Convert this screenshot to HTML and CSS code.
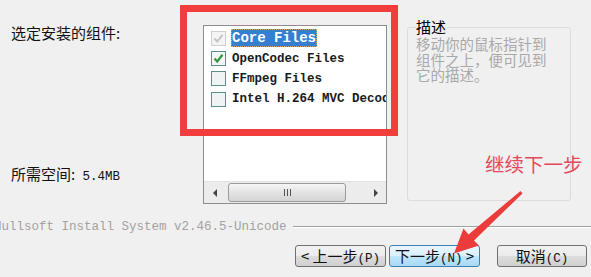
FILE: index.html
```html
<!DOCTYPE html>
<html lang="zh-CN">
<head>
    <meta charset="UTF-8">
    <meta name="viewport" content="width=device-width, initial-scale=1.0">
    <title>选择组件</title>
    <link rel="stylesheet" href="styles.css">
</head>
<body>
    <div class="installer">
        <div class="main">
            <div class="side">
                <div class="side-label">选定安装的组件:</div>
                <div class="side-label space">所需空间: <span class="mono">5.4MB</span></div>
            </div>

            <div class="listbox">
                <ul class="components">
                    <li class="item">
                        <svg class="check" width="15" height="15" viewBox="0 0 15 15">
                            <rect x="0.5" y="0.5" width="14" height="14" fill="#f4f4f4" stroke="#cfcfcf"/>
                            <path d="M3.5 7.5 L6.2 10.5 L11.5 3.8" fill="none" stroke="#c4c4c4" stroke-width="2"/>
                        </svg>
                        <span class="name selected">Core Files</span>
                    </li>
                    <li class="item">
                        <svg class="check" width="15" height="15" viewBox="0 0 15 15">
                            <rect x="0.5" y="0.5" width="14" height="14" fill="#f2f6f6" stroke="#5f8c8c"/>
                            <path d="M3.5 7.5 L6.2 10.5 L11.5 3.8" fill="none" stroke="#2f9a3c" stroke-width="2.2"/>
                        </svg>
                        <span class="name">OpenCodec Files</span>
                    </li>
                    <li class="item">
                        <svg class="check" width="15" height="15" viewBox="0 0 15 15">
                            <rect x="0.5" y="0.5" width="14" height="14" fill="#eef3f4" stroke="#5f8c8c"/>
                        </svg>
                        <span class="name">FFmpeg Files</span>
                    </li>
                    <li class="item">
                        <svg class="check" width="15" height="15" viewBox="0 0 15 15">
                            <rect x="0.5" y="0.5" width="14" height="14" fill="#eef3f4" stroke="#5f8c8c"/>
                        </svg>
                        <span class="name">Intel H.264 MVC Decoder</span>
                    </li>
                </ul>
                <div class="hscroll">
                    <div class="scroll-btn">
                        <svg width="5" height="8" viewBox="0 0 5 8"><path d="M4 0 L0 4 L4 8 Z" fill="#444"/></svg>
                    </div>
                    <div class="track">
                        <div class="thumb">
                            <span class="grip"></span><span class="grip"></span><span class="grip"></span>
                        </div>
                    </div>
                    <div class="scroll-btn">
                        <svg width="5" height="8" viewBox="0 0 5 8"><path d="M1 0 L5 4 L1 8 Z" fill="#444"/></svg>
                    </div>
                </div>
            </div>

            <fieldset class="desc">
                <legend>描述</legend>
                <p>移动你的鼠标指针到<br>组件之上，便可见到<br>它的描述。</p>
            </fieldset>
        </div>

        <div class="brand">
            <span class="brand-text">Nullsoft Install System v2.46.5-Unicode</span>
            <span class="rule"></span>
        </div>

        <div class="buttons">
            <button class="btn">&lt; 上一步<span class="mono">(P)</span></button>
            <button class="btn default">下一步<span class="mono">(N)</span> &gt;</button>
            <button class="btn cancel">取消<span class="mono">(C)</span></button>
        </div>

        <!-- annotations drawn over the dialog -->
        <div class="callout"></div>
        <div class="note">继续下一步</div>
        <svg class="pointer" width="591" height="277" viewBox="0 0 591 277">
            <polygon points="522.5,193.5 474,240.5 479,245.5 454,253.5 463.5,228.5 468.5,234.5 520.5,191" fill="#ec3b3b"/>
        </svg>
    </div>
</body>
</html>
```

FILE: styles.css
```css
body {
    margin: 0;
    background-color: #f0f0f0;
    font-family: "Noto Sans CJK SC", sans-serif;
    font-size: 15px;
    color: #111;
}

.installer {
    position: relative;
    width: 591px;
    height: 277px;
    overflow: hidden;
}

.mono {
    font-family: "Liberation Mono", monospace;
    font-size: 12.5px;
}

.main {
    display: flex;
    height: 219px;
    padding-left: 11px;
}

.side {
    width: 192px;
    padding-top: 24px;
}

.side-label {
    line-height: 18px;
    height: 18px;
}

.side-label.space {
    margin-top: 123px;
}

.side-label.space .mono {
    margin-left: 4px;
}

.listbox {
    margin-top: 25px;
    width: 184px;
    height: 179px;
    box-sizing: border-box;
    border: 1px solid #8a8d92;
    background-color: white;
    display: flex;
    flex-direction: column;
}

.components {
    flex: 1;
    list-style: none;
    margin: 0;
    padding: 2px 0 0 7px;
    overflow: hidden;
}

.item {
    display: flex;
    align-items: center;
    height: 20.4px;
    white-space: nowrap;
}

.check {
    flex: none;
    margin-right: 5px;
}

.name {
    font-family: "Liberation Mono", monospace;
    font-size: 12.5px;
    font-weight: bold;
    color: #1a1a1a;
    padding: 1px 1px;
}

.name.selected {
    font-size: 14px;
    color: white;
    background-color: #3380d2;
    outline: 1px dotted #c7a76a;
    outline-offset: -1px;
}

.hscroll {
    display: flex;
    height: 21px;
    background-color: #ececec;
    border-top: 1px solid #e2e2e2;
}

.scroll-btn {
    width: 22px;
    display: flex;
    align-items: center;
    justify-content: center;
}

.track {
    flex: 1;
    display: flex;
    padding: 1px 18px 1px 2px;
}

.thumb {
    flex: 1;
    display: flex;
    align-items: center;
    justify-content: center;
    gap: 2px;
    border: 1px solid #9a9a9a;
    border-radius: 3px;
    background: linear-gradient(#f6f6f6, #e3e3e3 50%, #d4d4d4);
}

.grip {
    width: 1px;
    height: 7px;
    background-color: #555;
}

.desc {
    margin: 18px 0 0 20px;
    padding: 0 8px;
    width: 164px;
    height: 183px;
    box-sizing: border-box;
    border: 1px solid #dcdcdc;
    border-radius: 3px;
}

.desc legend {
    padding: 0 1px 0 0;
    line-height: 18px;
    color: #000;
}

.desc p {
    margin: 0;
    font-size: 14.5px;
    line-height: 15.5px;
    color: #a9a9a9;
    white-space: nowrap;
}

.brand {
    display: flex;
    align-items: center;
    height: 16px;
}

.brand-text {
    margin-left: -6px;
    font-family: "Liberation Mono", monospace;
    font-size: 12.5px;
    color: #a2a2a2;
    white-space: nowrap;
}

.rule {
    flex: 1;
    margin-left: 6px;
    border-top: 1px solid #a0a0a0;
    border-bottom: 1px solid #ffffff;
}

.buttons {
    display: flex;
    justify-content: flex-end;
    margin-top: 10px;
    padding-right: 4px;
    gap: 3px;
}

.btn {
    width: 91px;
    height: 22px;
    padding: 0;
    font-family: "Noto Sans CJK SC", sans-serif;
    font-size: 15px;
    line-height: 20px;
    color: #111;
    border: 1px solid #707070;
    border-radius: 3px;
    background: linear-gradient(#f2f2f2, #ebebeb 50%, #dddddd 51%, #cfcfcf);
}

.btn.default {
    border-color: #3c7fb1;
    background: linear-gradient(#eaf6fd, #d9f0fc 50%, #bee6fd 51%, #a7d9f5);
}

.btn.cancel {
    width: 90px;
    margin-left: 14px;
}

.callout {
    position: absolute;
    left: 180px;
    top: 5px;
    width: 218px;
    height: 131px;
    box-sizing: border-box;
    border: 7px solid #f23d3d;
}

.note {
    position: absolute;
    left: 485px;
    top: 152px;
    font-size: 19.5px;
    line-height: 24px;
    color: #e4485c;
}

.pointer {
    position: absolute;
    left: 0;
    top: 0;
    pointer-events: none;
}
```
